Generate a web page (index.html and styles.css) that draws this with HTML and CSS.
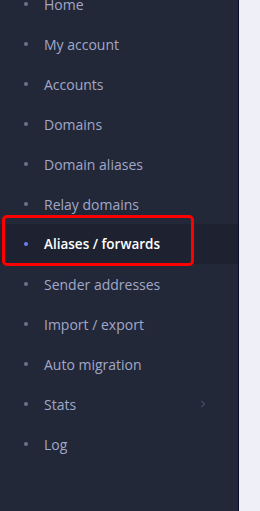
FILE: index.html
```html
<!DOCTYPE html>
<html lang="en">
  <head>
    <meta charset="UTF-8" />
    <meta name="viewport" content="width=device-width, initial-scale=1.0" />
    <title>Menu</title>
    <link rel="stylesheet" href="styles.css">
  </head>
  <body>
    <div class="layout">
      <aside class="sidebar">
        <ul class="menu">
          <li class="menu-item"><span class="bullet"></span>Home</li>
          <li class="menu-item"><span class="bullet"></span>My account</li>
          <li class="menu-item"><span class="bullet"></span>Accounts</li>
          <li class="menu-item"><span class="bullet"></span>Domains</li>
          <li class="menu-item"><span class="bullet"></span>Domain aliases</li>
          <li class="menu-item"><span class="bullet"></span>Relay domains</li>
          <li class="menu-item active">
            <span class="bullet"></span>Aliases / forwards
            <span class="highlight"></span>
          </li>
          <li class="menu-item"><span class="bullet"></span>Sender addresses</li>
          <li class="menu-item"><span class="bullet"></span>Import / export</li>
          <li class="menu-item"><span class="bullet"></span>Auto migration</li>
          <li class="menu-item">
            <span class="bullet"></span>Stats
            <svg class="arrow" width="6" height="8" viewBox="0 0 6 8">
              <path d="M1.5 1 L4.5 4 L1.5 7" fill="none" stroke="#5c6382" stroke-width="1" />
            </svg>
          </li>
          <li class="menu-item"><span class="bullet"></span>Log</li>
        </ul>
      </aside>
      <main class="content"></main>
    </div>
  </body>
</html>
```

FILE: styles.css
```css
body {
  margin: 0;
  padding: 0;
  font-family: "Open Sans", "Liberation Sans", sans-serif;
  background-color: #eff0f7;
}
.layout {
  display: flex;
  height: 511px;
  overflow: hidden;
}
.sidebar {
  width: 238px;
  flex-shrink: 0;
  background-color: #232838;
  border-right: 1px solid #0d0c2c;
}
.menu {
  list-style: none;
  margin: -16px 0 0 0;
  padding: 0;
}
.menu-item {
  position: relative;
  display: flex;
  align-items: center;
  height: 40px;
  padding-left: 24px;
  padding-right: 32px;
  font-size: 14px;
  color: #a1a7c9;
}
.bullet {
  width: 4px;
  height: 4px;
  border-radius: 50%;
  background-color: #6c7290;
  margin-right: 16px;
}
.menu-item.active {
  background-color: #1e2230;
  color: #ffffff;
  font-size: 13.5px;
  font-weight: 600;
}
.menu-item.active .bullet {
  background-color: #6f7ef2;
}
.highlight {
  position: absolute;
  left: 2px;
  top: -9px;
  width: 186px;
  height: 45px;
  border: 3px solid #ff0000;
  border-radius: 5px;
}
.arrow {
  margin-left: auto;
}
.content {
  flex: 1;
}
```
